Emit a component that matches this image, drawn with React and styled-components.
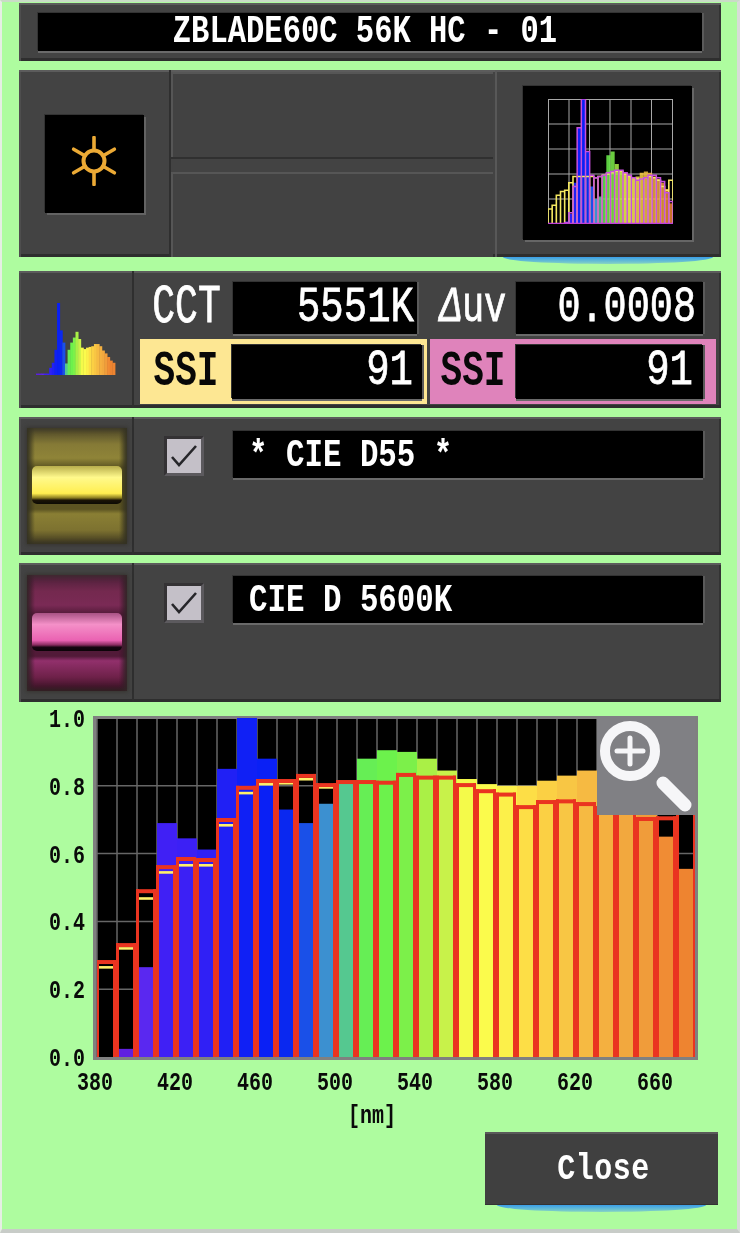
import React from "react";
import styled, { createGlobalStyle } from "styled-components";

const GlobalStyle = createGlobalStyle`
  html, body { margin: 0; padding: 0; background: #aefc9f; }
  #root { width: 740px; height: 1233px; overflow: hidden; }
`;

const MONO = `"Liberation Mono", "DejaVu Sans Mono", monospace`;

// chart data, one entry per 10nm bin from 380 to 670
const fills = [0, .024, .265, .69, .645, .612, .85, 1, .88, .73, .69, .747, .815, .88, .905, .9, .88, .845, .82, .805, .8, .8, .815, .83, .845, .85, .84, .74, .65, .555];
const outline = [.286, .336, .495, .566, .59, .587, .705, .8, .82, .82, .835, .808, .817, .817, .815, .838, .83, .83, .808, .79, .78, .743, .758, .76, .752, .74, .73, .708, .71, .75];
const dashOffset = [6, 4, 8, 6, 7, 6, 6, 6, 4, 3, 4, 3];
const colors = ["#5a20e0", "#6020e0", "#5a28f0", "#4020f5", "#3c20f5", "#3020f5", "#2020f5", "#1020f5", "#0a20f5", "#0a28f0", "#1a50e8", "#3c90d0", "#55c890", "#66ee55", "#6cf24c", "#7cf04a", "#aaf046", "#c8f24a", "#f4fa4a", "#fbfb4c", "#fcf04a", "#fdde46", "#fbd044", "#f8c644", "#f6ba42", "#f4b040", "#f2a83e", "#f09c3a", "#f08c34", "#ee8430"];

const thumbFill = [0, 0, 0, 0, .02, .08, .33, .77, 1, .58, .3, .2, .22, .4, .55, .58, .48, .42, .41, .38, .37, .38, .41, .42, .41, .38, .36, .33, .28, .165];
const thumbYellow = [.12, .15, .23, .26, .27, .33, .38, .38, .38, .38, .38, .37, .38, .39, .4, .41, .42, .42, .4, .38, .37, .36, .36, .37, .38, .37, .35, .3, .27, .35];
const thumbPink = [0, 0, 0, 0, .01, .09, .3, .77, 1, .58, .39, .37, .38, .39, .41, .42, .43, .43, .41, .39, .37, .35, .36, .37, .39, .39, .37, .34, .25, .18];

const miniCurve = [.02, .02, .02, .02, .02, .1, .17, .35, 1, .62, .45, .16, .35, .45, .52, .6, .5, .38, .36, .38, .39, .4, .43, .43, .4, .34, .3, .25, .2, .17];

const Page = styled.div`
  box-sizing: border-box;
  width: 740px;
  height: 1233px;
  background: #aefc9f;
  border-left: 2px solid #e6eee4;
  border-top: 2px solid #c9dcc6;
  border-right: 3px solid #d8dcd8;
  border-bottom: 4px solid #c8ccc8;
  padding: 1px 0 0 17px;
  font-family: ${MONO};
  filter: blur(0.45px);
`;

const Panel = styled.div`
  box-sizing: border-box;
  display: flex;
  position: relative;
  width: 702px;
  height: ${(p) => p.$height}px;
  margin-top: ${(p) => p.$top || 0}px;
  background: #434343;
  box-shadow: inset 0 2px 0 #5c5c5c, inset 2px 0 0 #4e4e4e, inset 0 -3px 0 #2e2e2e, inset -2px 0 0 #333;
`;

const TitlePanel = styled(Panel)`
  padding: 10px 19px;
`;

const BlackField = styled.div`
  box-sizing: border-box;
  display: flex;
  align-items: center;
  justify-content: ${(p) => p.$align || "flex-start"};
  width: ${(p) => (p.$width ? `${p.$width}px` : "100%")};
  height: ${(p) => p.$height || 52}px;
  padding: ${(p) => p.$pad || "0 6px 0 0"};
  background: #000;
  color: #fff;
  box-shadow: 0 2px 0 #6a6a6a, 2px 0 0 #5a5a5a, -1px -1px 0 #333;
`;

const MonoText = styled.span`
  display: inline-block;
  font-family: ${MONO};
  font-size: ${(p) => p.$size}px;
  font-weight: ${(p) => (p.$bold ? 700 : 400)};
  -webkit-text-stroke: ${(p) => (p.$bold ? 0 : 0.6)}px currentColor;
  letter-spacing: ${(p) => p.$spacing || 0}px;
  line-height: 1;
  white-space: pre;
  color: ${(p) => p.$color || "#fff"};
  transform: scaleY(${(p) => p.$stretch || 1.25});
`;

const ItalicDelta = styled.span`
  font-style: italic;
`;

const SideCell = styled.div`
  box-sizing: border-box;
  display: flex;
  align-items: center;
  justify-content: center;
  flex: 0 0 ${(p) => p.$width}px;
  border-right: 2px solid #2f2f2f;
`;

const MiddleColumn = styled.div`
  display: flex;
  flex-direction: column;
  justify-content: space-between;
  flex: 0 0 322px;
  padding-top: 2px;
`;

const BlankCell = styled.div`
  height: ${(p) => p.$height}px;
  background: #424242;
  border-bottom: ${(p) => (p.$lower ? "0" : "2px solid #303030")};
  box-shadow: inset 2px 2px 0 #565656;
`;

const ThumbCell = styled.div`
  display: flex;
  align-items: flex-start;
  flex: 1;
  margin-left: 2px;
  padding: 16px 0 0 28px;
  box-shadow: inset 2px 2px 0 #585858;
`;

const ThumbBox = styled.div`
  box-sizing: border-box;
  width: 169px;
  height: 154px;
  padding: 13px 0 0 25px;
  background: #000;
  box-shadow: 2px 2px 0 #666, -1px -1px 0 #333;
`;

const SunBox = styled.div`
  box-sizing: border-box;
  display: flex;
  align-items: center;
  justify-content: center;
  width: 99px;
  height: 98px;
  padding-bottom: 6px;
  background: #000;
  box-shadow: 2px 2px 0 #636363, -1px -1px 0 #333;
`;

const Glow = styled.div`
  position: absolute;
  left: ${(p) => p.$left}px;
  right: ${(p) => p.$right}px;
  bottom: -7px;
  height: 7px;
  border-radius: 0 0 50% 50% / 0 0 100% 100%;
  background: linear-gradient(#3a9ee8, #86d4c4);
`;

const ReadingGrid = styled.div`
  display: grid;
  grid-template-columns: 287px 286px;
  grid-template-rows: 52px 65px;
  column-gap: 3px;
  row-gap: 5px;
  padding: 11px 0 0 6px;
`;

const ReadingRow = styled.div`
  box-sizing: border-box;
  display: flex;
  align-items: ${(p) => (p.$band ? "center" : "flex-start")};
  background: ${(p) => p.$band || "transparent"};
`;

const ReadingLabel = styled.div`
  display: flex;
  align-items: center;
  justify-content: center;
  flex: 0 0 ${(p) => p.$width}px;
  height: 52px;
`;

const RollerCell = styled(SideCell)`
  padding: 0 0 0 2px;
`;

const Roller = styled.div`
  display: flex;
  justify-content: center;
  align-items: flex-start;
  box-sizing: border-box;
  width: 100px;
  height: 116px;
  padding-top: 38px;
  background: ${(p) => p.$track};
  box-shadow: 0 0 4px 1px rgba(52, 50, 44, 0.9), inset 0 0 5px 2px rgba(52, 50, 40, 0.6);
`;

const RollerBand = styled.div`
  width: 90px;
  height: 38px;
  border-radius: 5px;
  background: ${(p) => p.$band};
`;

const ChannelBody = styled.div`
  display: flex;
  align-items: flex-start;
  padding: ${(p) => p.$top}px 0 0 30px;
  gap: 29px;
`;

const CheckBox = styled.div`
  display: flex;
  align-items: center;
  justify-content: center;
  box-sizing: border-box;
  width: 40px;
  height: 40px;
  margin-top: ${(p) => p.$top}px;
  background: #c4c0c8;
  border: 3px solid #5c5a5e;
  border-top-color: #343234;
  border-left-color: #343234;
`;

const ChartWrap = styled.div`
  position: relative;
  width: 700px;
  height: 430px;
  margin: 0 0 0 11px;
`;

const ChartSvg = styled.svg`
  display: block;
`;

const AxisText = styled.text`
  font-family: ${MONO};
  font-size: 20px;
  font-weight: 700;
  fill: #0a0a0a;
`;

const ZoomBadge = styled.div`
  position: absolute;
  left: 567px;
  top: 14px;
  width: 98px;
  height: 99px;
  background: #808084;
`;

const Footer = styled.div`
  display: flex;
  justify-content: flex-end;
  width: 702px;
  padding-right: 3px;
  box-sizing: border-box;
`;

const CloseButton = styled.div`
  position: relative;
  display: flex;
  align-items: center;
  justify-content: center;
  box-sizing: border-box;
  width: 233px;
  height: 73px;
  padding-left: 4px;
  background: #404040;
  box-shadow: inset 0 2px 0 #5a5a5a, inset 0 -1px 0 #333;
`;

const SunIcon = () => {
  const rays = [0, 60, 120, 180, 240, 300];
  return (
    <svg width="48" height="50" viewBox="-24 -25 48 50">
      <circle r="10.5" fill="none" stroke="#ecaa35" strokeWidth="4" />
      {rays.map((a) => (
        <line key={a} x1="0" y1="-11" x2="0" y2="-23.5" stroke="#ecaa35" strokeWidth="3.6" strokeLinecap="round" transform={`rotate(${a})`} />
      ))}
    </svg>
  );
};

const stepPath = (values, h, bin) =>
  values
    .map((v, i) => {
      const x = i * bin;
      const y = h - v * h;
      return `M${x} ${h}V${y}H${x + bin}V${h}`;
    })
    .join("");

const ThumbChart = () => {
  const w = 125;
  const h = 125;
  const bin = w / 30;
  return (
    <svg width={w} height={h} viewBox={`0 0 ${w} ${h}`}>
      {[0.5, 21, 41.5, 62, 83, 103.5, 124.5].map((x) => (
        <line key={x} x1={x} y1="0" x2={x} y2={h} stroke="#a8a8a8" strokeWidth="1" />
      ))}
      {[0.5, 25, 50, 75, 100].map((y) => (
        <line key={y} x1="0" y1={y} x2={w} y2={y} stroke="#a8a8a8" strokeWidth="1" />
      ))}
      {thumbFill.map((v, i) => (
        <rect key={i} x={i * bin} y={h - v * h} width={bin} height={v * h} fill={colors[i]} opacity={i > 11 ? 0.85 : 1} />
      ))}
      <path d={stepPath(thumbYellow, h, bin)} fill="none" stroke="#f4e860" strokeWidth="1.6" />
      <path d={stepPath(thumbPink, h, bin)} fill="none" stroke="#c850dc" strokeWidth="1.5" />
      <line x1="0" y1={h - 0.5} x2={w} y2={h - 0.5} stroke="#c040d8" strokeWidth="1.5" />
    </svg>
  );
};

const MiniSpectrum = () => {
  const bin = 79 / 30;
  return (
    <svg width="80" height="73" viewBox="0 0 80 73">
      {miniCurve.map((v, i) => (
        <rect key={i} x={i * bin} y={72 - v * 72} width={bin + 0.4} height={v * 72} fill={colors[i + (i > 10 ? 1 : 0)] || colors[29]} />
      ))}
    </svg>
  );
};

const CheckMark = () => (
  <svg width="30" height="30" viewBox="0 0 30 30">
    <polyline points="3,16 10,24 27,5" fill="none" stroke="#26262a" strokeWidth="2.6" />
  </svg>
);

const Channel = ({ track, band, name, boxTop, fieldTop, height, top }) => (
  <Panel $height={height} $top={top}>
    <RollerCell $width={115}>
      <Roller $track={track}>
        <RollerBand $band={band} />
      </Roller>
    </RollerCell>
    <ChannelBody $top={fieldTop}>
      <CheckBox $top={boxTop}>
        <CheckMark />
      </CheckBox>
      <BlackField $width={470} $height={47} $pad="3px 0 0 16px">
        <MonoText $size={30.8} $bold>{name}</MonoText>
      </BlackField>
    </ChannelBody>
  </Panel>
);

const SpectrumChart = () => {
  const base = 1057;
  const span = 339;
  const top = (v) => base - v * span;
  const yTicks = [1, 0.8, 0.6, 0.4, 0.2, 0];
  const xTicks = [380, 420, 460, 500, 540, 580, 620, 660];
  const columns = Array.from({ length: 30 }, (_, i) => 97 + i * 20);
  return (
    <ChartSvg width="700" height="430" viewBox="30 702 700 430">
      <defs>
        <clipPath id="plotArea">
          <rect x="97" y="716" width="600" height="341" />
        </clipPath>
      </defs>
      <rect x="93" y="716" width="605" height="344" fill="#808080" />
      <rect x="97" y="719" width="598" height="338" fill="#000" />
      {columns.map((x) => (
        <line key={x} x1={x} y1="719" x2={x} y2={base} stroke="#666" strokeWidth="1.5" />
      ))}
      {[0.8, 0.6, 0.4, 0.2].map((v) => (
        <line key={v} x1="97" y1={top(v)} x2="695" y2={top(v)} stroke="#666" strokeWidth="1.5" />
      ))}
      <g clipPath="url(#plotArea)">
        {fills.map((v, i) => (
          <rect key={i} x={columns[i]} y={top(v)} width="20" height={v * span} fill={colors[i]} />
        ))}
        {dashOffset.map((d, i) => (
          <rect key={i} x={columns[i] + 2} y={top(outline[i]) + d} width="14" height="2.6" fill="#fff06a" />
        ))}
        {outline.map((v, i) => (
          <g key={i} fill="#ea3420">
            <rect x={columns[i] - 1} y={top(v)} width="20" height="4" />
            <rect x={columns[i] - 1} y={top(v)} width="3" height={v * span} />
            <rect x={columns[i] + 16} y={top(v)} width="3" height={v * span} />
          </g>
        ))}
      </g>
      <rect x="695" y="716" width="3" height="344" fill="#808080" />
      {yTicks.map((v) => (
        <AxisText key={v} textAnchor="end" transform={`translate(85 ${top(v) + 9}) scale(1 1.3)`}>
          {v.toFixed(1)}
        </AxisText>
      ))}
      {xTicks.map((n, i) => (
        <AxisText key={n} textAnchor="middle" transform={`translate(${95 + i * 80} 1090) scale(1 1.3)`}>
          {n}
        </AxisText>
      ))}
      <AxisText textAnchor="middle" transform="translate(372 1123) scale(1 1.3)">[nm]</AxisText>
    </ChartSvg>
  );
};

const MagnifierIcon = () => (
  <svg width="98" height="99" viewBox="0 0 98 99">
    <circle cx="33" cy="35" r="25" fill="none" stroke="#f6f6f8" strokeWidth="10" />
    <path d="M33 22V48M20 35H46" fill="none" stroke="#f6f6f8" strokeWidth="5" strokeLinecap="round" />
    <line x1="66" y1="67" x2="88" y2="89" stroke="#f6f6f8" strokeWidth="13" strokeLinecap="round" />
  </svg>
);

const YELLOW_EDGE = "linear-gradient(90deg, rgba(52,50,30,.9), transparent 8%, transparent 92%, rgba(52,50,30,.9))";
const PINK_EDGE = "linear-gradient(90deg, rgba(50,24,38,.9), transparent 8%, transparent 92%, rgba(50,24,38,.9))";

export default function App() {
  return (
    <>
      <GlobalStyle />
      <Page>
        <TitlePanel $height={58}>
          <BlackField $height={38} $align="center" $pad="0 10px 0 0">
            <MonoText $size={30.5} $bold>ZBLADE60C 56K HC - 01</MonoText>
          </BlackField>
        </TitlePanel>

        <Panel $height={187} $top={9}>
          <SideCell $width={152}>
            <SunBox>
              <SunIcon />
            </SunBox>
          </SideCell>
          <MiddleColumn>
            <BlankCell $height={85} />
            <BlankCell $height={85} $lower />
          </MiddleColumn>
          <ThumbCell>
            <ThumbBox>
              <ThumbChart />
            </ThumbBox>
          </ThumbCell>
          <Glow $left={484} $right={8} />
        </Panel>

        <Panel $height={137} $top={14}>
          <SideCell $width={115}>
            <MiniSpectrum />
          </SideCell>
          <ReadingGrid>
            <ReadingRow>
              <ReadingLabel $width={93}>
                <MonoText $size={38} $stretch={1.4}>CCT</MonoText>
              </ReadingLabel>
              <BlackField $width={184} $align="flex-end" $pad="0 3px 0 0">
                <MonoText $size={39} $stretch={1.3}>5551K</MonoText>
              </BlackField>
            </ReadingRow>
            <ReadingRow>
              <ReadingLabel $width={86}>
                <MonoText $size={37} $stretch={1.35}><ItalicDelta>Δ</ItalicDelta>uv</MonoText>
              </ReadingLabel>
              <BlackField $width={187} $align="flex-end" $pad="0 7px 0 0">
                <MonoText $size={38.5} $stretch={1.3}>0.0008</MonoText>
              </BlackField>
            </ReadingRow>
            <ReadingRow $band="#fde793">
              <ReadingLabel $width={92}>
                <MonoText $size={36} $stretch={1.4} $bold $color="#080808">SSI</MonoText>
              </ReadingLabel>
              <BlackField $width={190} $height={54} $align="flex-end" $pad="0 9px 0 0">
                <MonoText $size={39} $stretch={1.3}>91</MonoText>
              </BlackField>
            </ReadingRow>
            <ReadingRow $band="#df83bb">
              <ReadingLabel $width={86}>
                <MonoText $size={36} $stretch={1.4} $bold $color="#080808">SSI</MonoText>
              </ReadingLabel>
              <BlackField $width={187} $height={54} $align="flex-end" $pad="0 10px 0 0">
                <MonoText $size={39} $stretch={1.3}>91</MonoText>
              </BlackField>
            </ReadingRow>
          </ReadingGrid>
        </Panel>

        <Channel
          top={9}
          height={138}
          fieldTop={14}
          boxTop={5}
          name="* CIE D55 *"
          track={`${YELLOW_EDGE}, linear-gradient(#4a4428 0%, #857a36 14%, #8f8438 26%, #5c5422 34%, #5c5422 70%, #8a7f34 74%, #7d7230 88%, #3c3620 100%)`}
          band="linear-gradient(#b8ae4c 0%, #fff98c 30%, #ffee50 72%, #8a7d20 84%, #1a1406 90%, #0c0a04 100%)"
        />
        <Channel
          top={8}
          height={139}
          fieldTop={13}
          boxTop={7}
          name="CIE D 5600K"
          track={`${PINK_EDGE}, linear-gradient(#4a2038 0%, #74294f 14%, #7a2a55 26%, #521a38 34%, #521a38 70%, #92306c 74%, #6e2149 88%, #30101f 100%)`}
          band="linear-gradient(#a85284 0%, #f490c8 30%, #ea62b2 72%, #8a2c60 84%, #160610 90%, #0c0408 100%)"
        />

        <ChartWrap>
          <SpectrumChart />
          <ZoomBadge>
            <MagnifierIcon />
          </ZoomBadge>
        </ChartWrap>

        <Footer>
          <CloseButton>
            <MonoText $size={30} $bold $spacing={0.5}>Close</MonoText>
            <Glow $left={12} $right={12} />
          </CloseButton>
        </Footer>
      </Page>
    </>
  );
}
